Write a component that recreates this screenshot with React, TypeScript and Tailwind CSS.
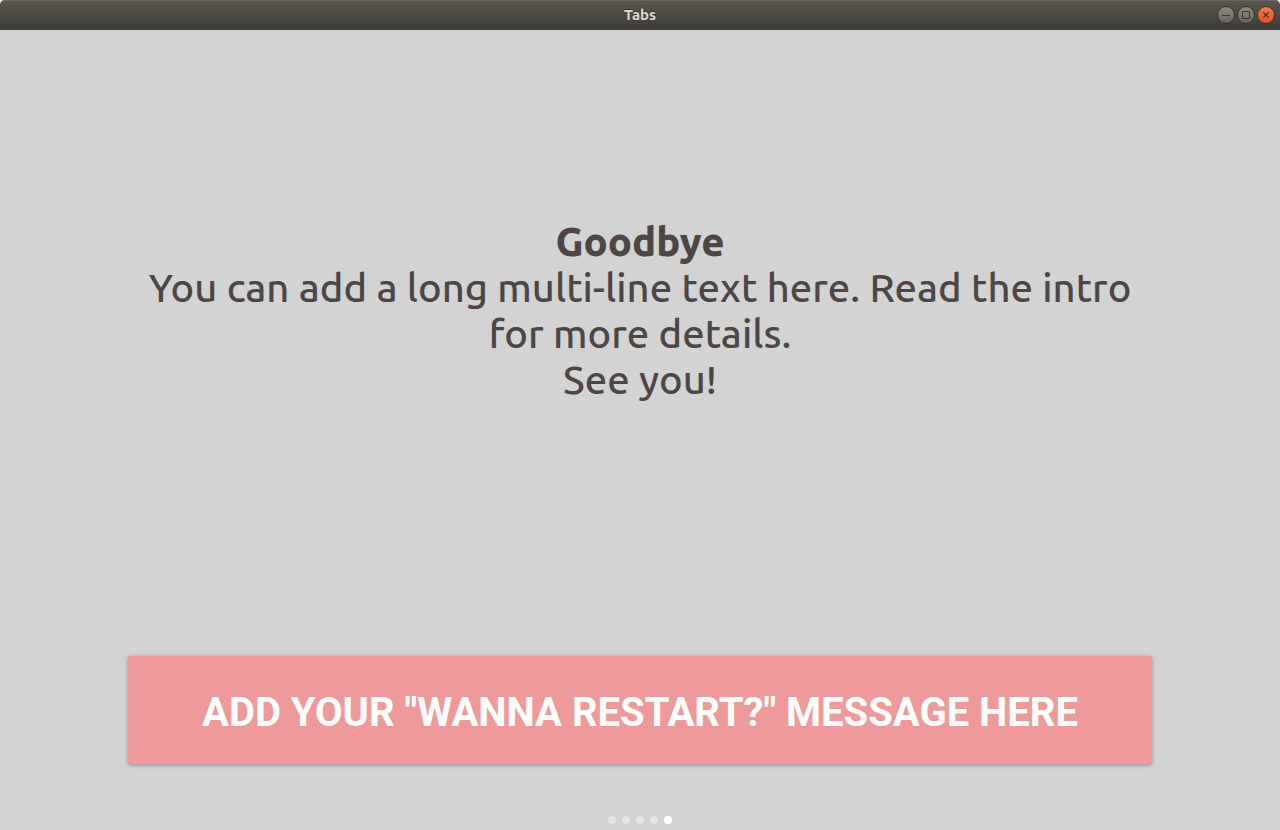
import React from "react";

const pages = [1, 2, 3, 4, 5];

export default function App() {
  return (
    <div className="flex min-h-screen flex-col bg-[#d3d3d3]">
      <div className="flex flex-col bg-white">
        <header className="grid h-[30px] grid-cols-[1fr_auto_1fr] items-center rounded-t-[5px] bg-linear-to-b from-[#5a574e] to-[#3d3c38] px-1 shadow-[inset_0_1px_0_#68655b]">
          <h1 className="col-start-2 font-[Ubuntu,'Noto_Sans',sans-serif] text-[15px] leading-5 font-bold text-[#dfdbd2] text-shadow-[0_-1px_0_#33322e]">Tabs</h1>
          <div className="flex justify-end">
            <button aria-label="Minimize" className="size-5">
              <svg viewBox="0 0 20 20" className="size-5"><defs><linearGradient id="grey" x2="0" y2="1"><stop stopColor="#8c8a82" /><stop offset="1" stopColor="#66645d" /></linearGradient></defs><circle cx="10" cy="10" r="8.5" fill="url(#grey)" stroke="#33322e" /><path d="M6 10.5h8" stroke="#3b3935" /></svg>
            </button>
            <button aria-label="Maximize" className="size-5">
              <svg viewBox="0 0 20 20" className="size-5"><circle cx="10" cy="10" r="8.5" fill="url(#grey)" stroke="#33322e" /><path d="M6.5 6.5h7v7h-7z" fill="none" stroke="#3b3935" /></svg>
            </button>
            <button aria-label="Close" className="size-5">
              <svg viewBox="0 0 20 20" className="size-5"><defs><linearGradient id="orange" x2="0" y2="1"><stop stopColor="#f37c54" /><stop offset="1" stopColor="#e3501f" /></linearGradient></defs><circle cx="10" cy="10" r="8.5" fill="url(#orange)" stroke="#33322e" /><path d="M7.3 7.3l5.4 5.4M12.7 7.3l-5.4 5.4" stroke="#4b2416" strokeWidth="1.2" /></svg>
            </button>
          </div>
        </header>
      </div>
      <main className="flex flex-1 flex-col px-[10%]">
        <section className="flex flex-1 flex-col items-center justify-center pb-16 text-center font-[Ubuntu,'Noto_Sans',sans-serif] text-[40px] leading-[46px] font-medium text-[#4d4646]">
          <h2 className="font-extrabold">Goodbye</h2>
          <p>You can add a long multi-line text here. Read the intro for more details.</p>
          <p>See you!</p>
        </section>
        <button className="h-[108px] rounded-xs bg-[#ef9a9a] pt-[6px] font-[Roboto,sans-serif] text-[40px] font-bold text-white shadow-[0_1px_4px_rgba(0,0,0,0.35)]">ADD YOUR "WANNA RESTART?" MESSAGE HERE</button>
      </main>
      <nav aria-label="Pages" className="flex h-[66px] items-end justify-center gap-[6px] pb-[6px]">
        {pages.map((page) => (
          <button key={page} aria-label={`Page ${page}`} aria-current={page === 5 ? "page" : undefined} className={page === 5 ? "size-2 rounded-full bg-white" : "size-2 rounded-full bg-[#e6e6e6]"} />
        ))}
      </nav>
    </div>
  );
}
